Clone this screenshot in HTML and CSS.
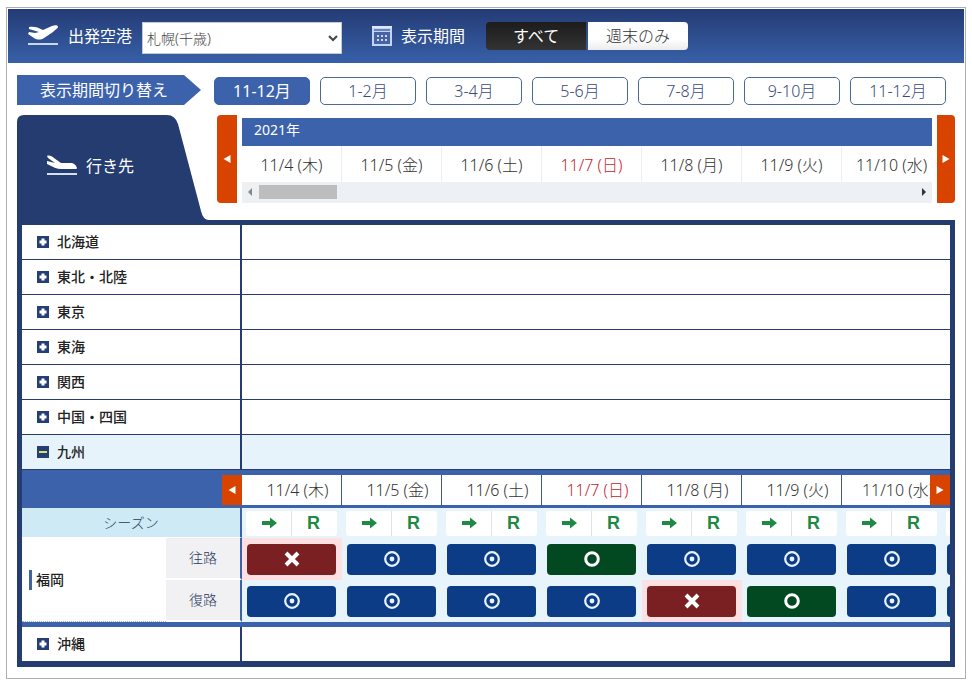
FILE: index.html
```html
<!DOCTYPE html>
<html lang="ja">
<head>
<meta charset="utf-8">
<meta name="viewport" content="width=device-width, initial-scale=1">
<title>空席カレンダー</title>
<link rel="stylesheet" href="styles.css">
</head>
<body>
<svg class="defs" aria-hidden="true">
  <symbol id="plus" viewBox="0 0 12 12"><path fill="#263e77" d="M0 0h12v12H0z"/><path fill="#fff" d="M4.500 2.500h3v2h2v3h-2v2h-3v-2h-2v-3h2z"/></symbol>
  <symbol id="minus" viewBox="0 0 12 12"><path fill="#263e77" d="M0 0h12v12H0z"/><path fill="#dfe05a" d="M2 5h8v2H2z"/></symbol>
  <symbol id="left" viewBox="0 0 8 10"><path fill="#fff" d="M7.500 1v8L0.500 5z"/></symbol>
  <symbol id="right" viewBox="0 0 8 10"><path fill="#fff" d="M0.500 1v8l7-4z"/></symbol>
  <symbol id="go" viewBox="0 0 15 12"><path fill="#1f8a43" d="M0 4h8V0.500L15 6l-7 5.500V8H0z"/></symbol>
  <symbol id="full" viewBox="0 0 16 16"><path fill="none" stroke="#fff" stroke-width="4" d="M2 2l12 12M14 2L2 14"/></symbol>
  <symbol id="many" viewBox="0 0 16 16"><circle cx="8" cy="8" r="6.800" fill="none" stroke="#e9f3ff" stroke-width="2.200"/><circle cx="8" cy="8" r="2.400" fill="#e9f3ff"/></symbol>
  <symbol id="some" viewBox="0 0 16 16"><circle cx="8" cy="8" r="6.300" fill="none" stroke="#fff" stroke-width="3"/></symbol>
</svg>

<main class="frame">
  <form class="topbar">
    <svg class="plane" viewBox="0 0 31 22" aria-hidden="true"><path fill="#fff" d="M1 2c4-1 9 0 14 3l9-4c3-1 6-1 6 1 0 1-3 3-5 5l-9 6c-3 2-7 2-10 0L0 9l1-2 6 1 4-1L1 4z"/><path fill="#c6d8f5" d="M0 18h30v2H0z"/></svg>
    <label class="bar-label" for="airport">出発空港</label>
    <select id="airport" class="airport"><option>札幌(千歳)</option></select>
    <svg class="calendar" viewBox="0 0 20 20" aria-hidden="true"><path fill="#c3d3f2" d="M0 0h20v20H0z"/><path fill="#dfe9fb" d="M0 0h20v2H0z"/><path fill="#6582bd" d="M2 3h16v2H2z"/><path fill="#4763a4" d="M2 6h16v12H2z"/><path stroke="#c8d8f6" stroke-width="2" stroke-dasharray="2 2" d="M5 10h10M5 14h10"/></svg>
    <span class="bar-label">表示期間</span>
    <div class="toggle">
      <button type="button" class="toggle-btn is-on">すべて</button>
      <button type="button" class="toggle-btn">週末のみ</button>
    </div>
  </form>

  <div class="content">
    <nav class="periods">
      <span class="periods-title">表示期間切り替え</span>
      <button type="button" class="period is-current">11-12月</button>
      <button type="button" class="period">1-2月</button>
      <button type="button" class="period">3-4月</button>
      <button type="button" class="period">5-6月</button>
      <button type="button" class="period">7-8月</button>
      <button type="button" class="period">9-10月</button>
      <button type="button" class="period">11-12月</button>
    </nav>

    <div class="board-head">
      <h2 class="dest-tab">
        <svg class="plane" viewBox="0 0 31 22" aria-hidden="true"><path fill="#fff" d="M1 1c2-1 5 0 7 2l7 5h9c4 0 6 2 7 5 0 1-1 1-3 1H15C11 14 7 12 1 9V6l8 2L2 3z"/><path fill="#d5e0f5" d="M1 18h30v2H1z"/></svg>
        行き先
      </h2>
      <div class="dates">
        <button type="button" class="step step-prev" aria-label="前へ"><svg class="tri"><use href="#left"/></svg></button>
        <div class="dates-view">
          <div class="year">2021年</div>
          <ol class="days">
            <li>11/4 (木)</li><li>11/5 (金)</li><li>11/6 (土)</li><li class="holiday">11/7 (日)</li><li>11/8 (月)</li><li>11/9 (火)</li><li>11/10 (水)</li>
          </ol>
          <div class="scroll">
            <svg class="scroll-tri" viewBox="0 0 4 8"><path fill="#888" d="M4 0v8L0 4z"/></svg>
            <span class="thumb"></span>
            <svg class="scroll-tri" viewBox="0 0 4 8"><path fill="#333" d="M0 0v8l4-4z"/></svg>
          </div>
        </div>
        <button type="button" class="step step-next" aria-label="次へ"><svg class="tri"><use href="#right"/></svg></button>
      </div>
    </div>

    <div class="board">
      <div class="region"><button type="button" class="region-name"><svg class="mark"><use href="#plus"/></svg>北海道</button></div>
      <div class="region"><button type="button" class="region-name"><svg class="mark"><use href="#plus"/></svg>東北・北陸</button></div>
      <div class="region"><button type="button" class="region-name"><svg class="mark"><use href="#plus"/></svg>東京</button></div>
      <div class="region"><button type="button" class="region-name"><svg class="mark"><use href="#plus"/></svg>東海</button></div>
      <div class="region"><button type="button" class="region-name"><svg class="mark"><use href="#plus"/></svg>関西</button></div>
      <div class="region"><button type="button" class="region-name"><svg class="mark"><use href="#plus"/></svg>中国・四国</button></div>
      <div class="region is-open"><button type="button" class="region-name"><svg class="mark"><use href="#minus"/></svg>九州</button></div>

      <div class="detail">
        <table class="seats">
          <colgroup><col class="col-city"><col class="col-way"><col span="8" class="col-day"></colgroup>
          <thead>
            <tr class="row-days">
              <td colspan="2" class="corner"></td>
              <th scope="col">11/4 (木)</th><th scope="col">11/5 (金)</th><th scope="col">11/6 (土)</th><th scope="col" class="holiday">11/7 (日)</th><th scope="col">11/8 (月)</th><th scope="col">11/9 (火)</th><th scope="col">11/10 (水)</th><th scope="col"></th>
            </tr>
            <tr class="row-season">
              <th colspan="2" scope="row" class="season">シーズン</th>
              <td><div class="fare"><svg class="go"><use href="#go"/></svg><b>R</b></div></td>
              <td><div class="fare"><svg class="go"><use href="#go"/></svg><b>R</b></div></td>
              <td><div class="fare"><svg class="go"><use href="#go"/></svg><b>R</b></div></td>
              <td><div class="fare"><svg class="go"><use href="#go"/></svg><b>R</b></div></td>
              <td><div class="fare"><svg class="go"><use href="#go"/></svg><b>R</b></div></td>
              <td><div class="fare"><svg class="go"><use href="#go"/></svg><b>R</b></div></td>
              <td><div class="fare"><svg class="go"><use href="#go"/></svg><b>R</b></div></td>
              <td><div class="fare"></div></td>
            </tr>
          </thead>
          <tbody>
            <tr class="row-seat">
              <th rowspan="2" scope="rowgroup" class="city"><span class="city-name">福岡</span></th>
              <th scope="row" class="way">往路</th>
              <td class="is-full"><button type="button" class="seat full" aria-label="満席"><svg class="sign"><use href="#full"/></svg></button></td>
              <td><button type="button" class="seat" aria-label="空席あり"><svg class="sign"><use href="#many"/></svg></button></td>
              <td><button type="button" class="seat" aria-label="空席あり"><svg class="sign"><use href="#many"/></svg></button></td>
              <td><button type="button" class="seat some" aria-label="残りわずか"><svg class="sign"><use href="#some"/></svg></button></td>
              <td><button type="button" class="seat" aria-label="空席あり"><svg class="sign"><use href="#many"/></svg></button></td>
              <td><button type="button" class="seat" aria-label="空席あり"><svg class="sign"><use href="#many"/></svg></button></td>
              <td><button type="button" class="seat" aria-label="空席あり"><svg class="sign"><use href="#many"/></svg></button></td>
              <td><button type="button" class="seat" aria-label="空席あり"></button></td>
            </tr>
            <tr class="row-seat">
              <th scope="row" class="way">復路</th>
              <td><button type="button" class="seat" aria-label="空席あり"><svg class="sign"><use href="#many"/></svg></button></td>
              <td><button type="button" class="seat" aria-label="空席あり"><svg class="sign"><use href="#many"/></svg></button></td>
              <td><button type="button" class="seat" aria-label="空席あり"><svg class="sign"><use href="#many"/></svg></button></td>
              <td><button type="button" class="seat" aria-label="空席あり"><svg class="sign"><use href="#many"/></svg></button></td>
              <td class="is-full"><button type="button" class="seat full" aria-label="満席"><svg class="sign"><use href="#full"/></svg></button></td>
              <td><button type="button" class="seat some" aria-label="残りわずか"><svg class="sign"><use href="#some"/></svg></button></td>
              <td><button type="button" class="seat" aria-label="空席あり"><svg class="sign"><use href="#many"/></svg></button></td>
              <td><button type="button" class="seat" aria-label="空席あり"></button></td>
            </tr>
          </tbody>
        </table>
        <button type="button" class="mini mini-prev" aria-label="前へ"><svg class="tri"><use href="#left"/></svg></button>
        <button type="button" class="mini mini-next" aria-label="次へ"><svg class="tri"><use href="#right"/></svg></button>
      </div>

      <div class="region"><button type="button" class="region-name"><svg class="mark"><use href="#plus"/></svg>沖縄</button></div>
    </div>
  </div>
</main>
</body>
</html>
```
FILE: styles.css
```css
* { box-sizing: border-box; }

:root {
  --navy: #253c70;
  --blue: #3b62aa;
  --orange: #d84300;
}

body {
  margin: 7px 6px 4px;
  background: #fff;
  color: #333;
  font: 16px/24px "Noto Sans", "Noto Sans CJK JP", sans-serif;
}

button, select { font: inherit; color: inherit; }
button { display: flex; align-items: center; justify-content: center; margin: 0; padding: 0; border: 0; }
svg { display: block; flex: none; }
.defs { display: none; }

.frame { border: 1px solid #aaadb3; padding: 1px; }

.topbar {
  display: flex;
  align-items: center;
  height: 54px;
  padding-left: 20px;
  background: linear-gradient(#243b75, #3860a8);
  color: #fff;
}
.plane { width: 31px; height: 22px; margin-right: 9px; }
.airport {
  width: 200px;
  height: 32px;
  margin: 4px 30px 0 10px;
  padding: 0;
  border: 1px solid #c5cbd6;
  border-radius: 0;
  background: #fff;
  color: #444;
  font-size: 14px;
  font-weight: 300;
}
.calendar { width: 20px; height: 20px; margin-right: 9px; }
.toggle { display: flex; gap: 2px; margin-left: 21px; }
.toggle-btn {
  width: 100px;
  height: 28px;
  border-radius: 0 4px 4px 0;
  background: linear-gradient(#fff 60%, #ececec);
  color: #333;
  font-weight: 300;
}
.toggle-btn.is-on { border-radius: 4px 0 0 4px; background: linear-gradient(#1c1c1c, #333); color: #fff; font-weight: 400; }

.content { padding: 12px 9px 10px; }

.periods { display: flex; align-items: flex-end; gap: 10px; }
.periods-title {
  width: 184px;
  height: 30px;
  margin-right: 3px;
  padding-left: 23px;
  background: var(--blue);
  clip-path: polygon(0 0, 167px 0, 100% 50%, 167px 100%, 0 100%);
  color: #fff;
  line-height: 30px;
}
.period {
  width: 96px;
  height: 28px;
  border: 1px solid #4c6a94;
  border-radius: 5px;
  background: #fff;
  color: #3a4a78;
  font-weight: 300;
}
.period.is-current { border-color: var(--blue); background: var(--blue); color: #fff; font-weight: 400; }

.board-head { display: flex; align-items: flex-start; gap: 8px; margin-top: 10px; }
.dest-tab {
  display: flex;
  align-items: center;
  width: 192px;
  height: 105px;
  margin: 0;
  padding: 0 0 4px 29px;
  background: var(--navy);
  clip-path: path("M0 7Q0 0 7 0H150Q158 0 161 9L184 96Q186 105 192 105H0Z");
  color: #fff;
  font-size: 16px;
  font-weight: 400;
}
.dates { display: flex; flex: 1; min-width: 0; gap: 5px; }
.step { flex: none; height: 88px; background: var(--orange); }
.step-prev { width: 20px; border-radius: 4px 0 0 4px; }
.step-next { width: 18px; border-radius: 0 4px 4px 0; }
.tri { width: 8px; height: 10px; }
.dates-view { flex: 1; min-width: 0; margin-top: 3px; overflow: hidden; }
.year { height: 28px; padding-left: 12px; background: var(--blue); color: #fff; font-size: 14px; }
.days { display: flex; height: 36px; margin: 0; padding: 0; list-style: none; font-weight: 300; }
.days li { flex: none; width: 100px; border-right: 1px solid #eceff2; line-height: 38px; text-align: center; }
.holiday { color: #c41e2e; }
.scroll { display: flex; align-items: center; height: 21px; padding: 0 6px 2px; background: #edf1f3; }
.scroll-tri { width: 4px; height: 8px; }
.thumb { width: 78px; height: 14px; margin: 0 auto 0 7px; background: #bdbdbd; }

.board { border: 5px solid var(--navy); }
.region { display: flex; height: 35px; border-bottom: 1px solid var(--navy); }
.region.is-open { background: #e6f3fb; }
.region-name {
  justify-content: flex-start;
  gap: 8px;
  width: 220px;
  padding-left: 15px;
  border-right: 2px solid var(--navy);
  background: none;
  color: #222;
  font-size: 14px;
  font-weight: 500;
}
.mark { width: 12px; height: 12px; }

.detail { position: relative; overflow: hidden; border: solid var(--blue); border-width: 5px 0; }
.seats { width: 1020px; border-collapse: separate; border-spacing: 0; table-layout: fixed; }
.seats th, .seats td { padding: 0; font-weight: 300; }
.col-city { width: 144px; }
.col-way { width: 76px; }
.col-day { width: 100px; }
.row-days > * { height: 33px; border-bottom: 3px solid var(--blue); }
.row-days th { border-right: 1px solid #40598c; }
.seats .row-days th { padding-left: 12px; }
.seats .corner { background: var(--blue); }
.row-season > * { height: 30px; }
.seats td { padding-right: 1px; background: #e8f4fc; }
.seats .season { border-right: 2px solid var(--blue); border-bottom: 1px solid #fff; background: #cdeaf5; color: #2b3a60; font-size: 14px; }
.fare {
  display: flex;
  align-items: center;
  justify-content: space-between;
  width: 91px;
  height: 25px;
  margin: 0 auto;
  padding: 0 17px 0 16px;
  border-radius: 3px;
  background: linear-gradient(90deg, #fff 45px, #e0e4e8 45px, #e0e4e8 46px, #fff 46px);
  color: #1f8a43;
  font: 700 18px/24px "Liberation Sans", sans-serif;
}
.go { width: 15px; height: 12px; }
.row-seat > * { height: 42px; }
.city { border-bottom: 1px dotted #9db4d6; text-align: left; }
.city-name { display: block; height: 20px; margin-left: 7px; padding-left: 4px; border-left: 3px solid #41639f; color: #222; font-size: 14px; font-weight: 500; line-height: 20px; }
.way { border-right: 2px solid var(--blue); border-bottom: 2px solid #fff; background: #f1f1f3; color: #2b3a60; font-size: 14px; }
.seat { width: 89px; height: 31px; margin: 0 auto; border-radius: 4px; background: #0d3c87; }
.seat.full { background: #7a2022; }
.seat.some { background: #024820; }
.seats .is-full { background: #fde0e2; }
.sign { width: 16px; height: 16px; }
.mini { position: absolute; top: 0; width: 20px; height: 30px; background: var(--orange); }
.mini-prev { left: 200px; }
.mini-next { right: 0; }
```
